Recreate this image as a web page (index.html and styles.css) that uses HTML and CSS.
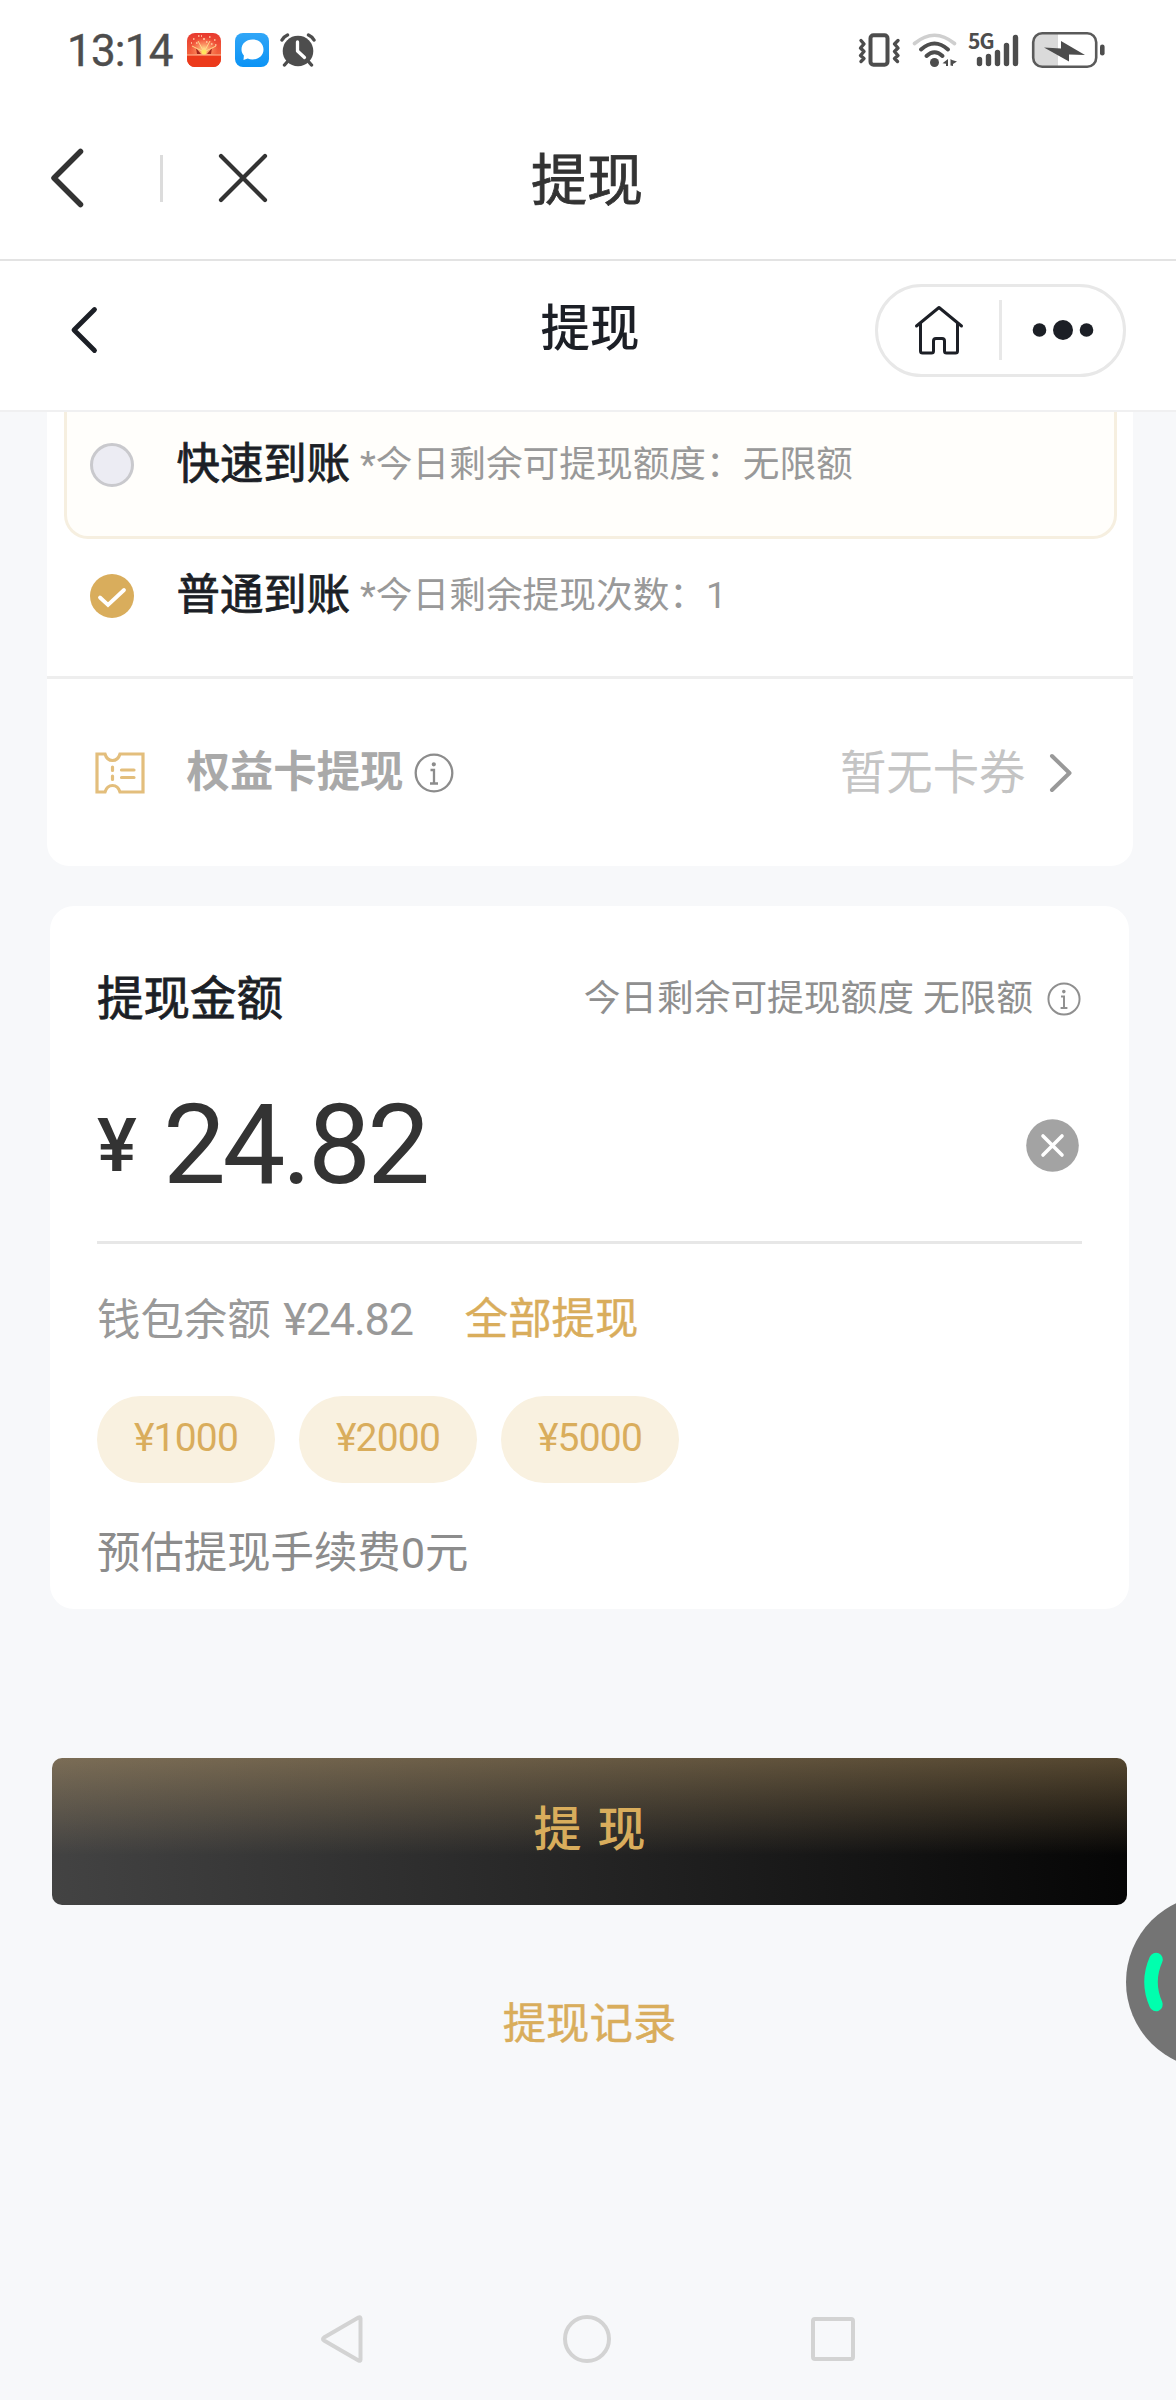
FILE: index.html
```html
<!DOCTYPE html>
<html lang="zh-CN">
<head>
<meta charset="utf-8">
<title>提现</title>
<link rel="stylesheet" href="styles.css">
</head>
<body>
<div class="statusbar">
  <div class="status-left">
    <span class="time">13:14</span>
    <svg class="app-icon" width="34" height="34" viewBox="0 0 34 34">
      <defs>
        <linearGradient id="red" x1="0" y1="0" x2="0" y2="1"><stop offset="0" stop-color="#e8392f"/><stop offset=".6" stop-color="#f2603c"/><stop offset="1" stop-color="#e02a14"/></linearGradient>
        <radialGradient id="glow"><stop offset="0" stop-color="#ffe08a"/><stop offset=".45" stop-color="#ff9d6b" stop-opacity=".75"/><stop offset="1" stop-color="#ff8a5a" stop-opacity="0"/></radialGradient>
      </defs>
      <rect width="34" height="34" rx="8" fill="url(#red)"/>
      <ellipse cx="17" cy="16" rx="14" ry="12" fill="url(#glow)"/>
      <path d="M9 15l5 6h-4zM25 15l-5 6h4z" fill="#a3261b"/>
      <path d="M17 19L5 13M17 19L29 13M17 19L11 8M17 19L23 8" stroke="#ffd98a" stroke-width="1"/>
      <path d="M6 6h1.500M11 3h1.500M22 4h1.500M27 7h1.500M16 6h2M9 10h1.500M24 11h1.500M14 3h1M19 9h1.500M28 12h1.500M4 10h1" stroke="#ffd0a8" stroke-width="1.500"/>
      <path d="M0 22h34v4a8 8 0 0 1-8 8H8a8 8 0 0 1-8-8z" fill="#ec3a1b"/>
      <path d="M0 22h34" stroke="#ffc09a" stroke-width="1.200"/>
      <circle cx="17" cy="19" r="2.600" fill="#ffe45e"/>
    </svg>
    <svg class="app-icon" width="34" height="34" viewBox="0 0 34 34">
      <defs><linearGradient id="blue" x1="0" y1="0" x2="0" y2="1"><stop offset="0" stop-color="#31a6f7"/><stop offset="1" stop-color="#0b93f5"/></linearGradient></defs>
      <rect width="34" height="34" rx="8" fill="url(#blue)"/>
      <path d="M17.500 6.500c6.600 0 11 4.400 11 10s-4.400 10-11 10c-1.800 0-3.400-.3-4.800-1l-4.200 1.500.4-4.500c-1.500-1.700-2.400-3.700-2.400-6 0-5.600 4.400-10 11-10z" fill="#fff"/>
    </svg>
    <svg class="alarm" width="36" height="34" viewBox="0 0 36 34">
      <g fill="none" stroke="#4d4d4d" stroke-width="3.400" stroke-linecap="round"><path d="M2 7Q4 3.500 7.500 2M34 7Q32 3.500 28.500 2M8 28l-3.500 4M28 28l3.500 4"/></g>
      <circle cx="18" cy="18" r="15.300" fill="#4d4d4d"/>
      <path d="M17.500 9v9l7 6.500" fill="none" stroke="#fff" stroke-width="3.300" stroke-linecap="round" stroke-linejoin="round"/>
    </svg>
  </div>
  <div class="status-right">
    <svg class="vibrate" width="44" height="36" viewBox="0 0 44 36" fill="none" stroke="#4d4d4d" stroke-linecap="round" stroke-linejoin="round">
      <rect x="12.500" y="3.200" width="17" height="29.600" rx="3" stroke-width="4"/>
      <path d="M3 8.500l3 3.500-3.500 4L6 19.500 2.500 23.500 6 26.500l-3 3M40 8.500l-3.500 3.500 3.500 4-3.500 3.500 3.500 4-3.500 3 3 3" stroke-width="3.400"/>
    </svg>
    <svg class="wifi" width="46" height="36" viewBox="0 0 46 36" fill="none" stroke-linecap="round">
      <path d="M2.500 11.500Q22.500-5 42.500 11.500" stroke="#cfcfcf" stroke-width="3.600"/>
      <path d="M9 17.500Q22.500 5.500 36 17.500" stroke="#4d4d4d" stroke-width="4"/>
      <path d="M14.500 24Q22.500 16.500 30.500 24" stroke="#4d4d4d" stroke-width="4"/>
      <circle cx="22.500" cy="30.500" r="4.500" fill="#4d4d4d"/>
      <path d="M36 27v7h-2v-2.200l-3.500-.5zM38.500 27l1.500 1 5 1.500-4 2.500v2l-2.500-.5z" fill="#4d4d4d"/>
    </svg>
    <div class="signal">
      <span class="net">5G</span>
      <svg width="54" height="36" viewBox="0 0 54 36" stroke="#4d4d4d" stroke-width="5.400" stroke-linecap="round">
        <path d="M12.500 27.500v4M21.500 24.500v7M30.500 20.500v11M39.500 13.500v18M48.500 5.500v26"/>
      </svg>
    </div>
    <svg class="battery" width="76" height="38" viewBox="0 0 76 38">
      <path d="M11 3h16v32H11a8 8 0 0 1-8-8V11a8 8 0 0 1 8-8z" fill="#dadada"/>
      <rect x="2.200" y="2.200" width="63" height="33.600" rx="9" fill="none" stroke="#5a5a5a" stroke-width="2.600"/>
      <path d="M13 16.500l17 1v-7.500L54 24l-16-.5v7z" fill="#4d4d4d"/>
      <rect x="69" y="13.500" width="4.600" height="11" rx="2.300" fill="#4d4d4d"/>
    </svg>
  </div>
</div>

<div class="navbar">
  <svg class="nav-back" width="36" height="62" viewBox="0 0 36 62"><path d="M31.500 4.500L5 31l26.500 26.500" /></svg>
  <span class="nav-sep"></span>
  <svg class="nav-close" width="52" height="52" viewBox="0 0 52 52"><path d="M4 4l44 44M48 4L4 48"/></svg>
  <h1 class="nav-title">提现</h1>
</div>

<div class="subnav">
  <svg class="sub-back" width="30" height="50" viewBox="0 0 30 50"><path d="M25.500 4.500L5 25l20.500 20.500"/></svg>
  <h2 class="sub-title">提现</h2>
  <div class="capsule">
    <svg width="52" height="54" viewBox="0 0 52 54" fill="none" stroke="#1c1f26" stroke-width="3" stroke-linecap="round" stroke-linejoin="round">
      <path d="M3.500 23L26 4.500 48.500 23M7.500 20v28q0 2 2 2h9q2 0 2-2V38q0-2.500 2.500-2.500h6q2.500 0 2.500 2.500v10q0 2 2 2h9q2 0 2-2V20"/>
    </svg>
    <span class="capsule-sep"></span>
    <svg width="62" height="22" viewBox="0 0 62 22" fill="#1c1f26"><circle cx="7.500" cy="11" r="6.800"/><circle cx="31" cy="11" r="10"/><circle cx="54.500" cy="11" r="6.800"/></svg>
  </div>
</div>

<main class="content">
  <section class="card methods">
    <div class="method fast">
      <span class="radio"></span>
      <span class="method-name">快速到账</span>
      <span class="method-note">*今日剩余可提现额度：无限额</span>
    </div>
    <div class="method normal">
      <svg class="radio-on" width="44" height="44" viewBox="0 0 44 44"><circle cx="22" cy="22" r="22" fill="#d9ad5c"/><path d="M10 23.500l8 7.500L34 16" fill="none" stroke="#fff" stroke-width="3.800" stroke-linecap="round"/></svg>
      <span class="method-name">普通到账</span>
      <span class="method-note">*今日剩余提现次数：1</span>
    </div>
    <div class="coupon">
      <svg width="50" height="42" viewBox="0 0 50 42" fill="none" stroke="#e3be7c" stroke-width="3.200">
        <path d="M2 2h8q2 6.500 7.500 6.500T25 2h23v38H25q-2-6.500-7.500-6.500T10 40H2z"/>
        <path d="M17.500 15v3.500M17.500 24v3.500M26.500 18H39M26.500 25.500H39" stroke-linecap="round"/>
      </svg>
      <span class="coupon-name">权益卡提现</span>
      <svg class="info" width="40" height="40" viewBox="0 0 40 40" fill="none" stroke="#8c8c8c" stroke-width="2.300"><circle cx="20" cy="20" r="18.300"/><path d="M16.500 17H20v13.500M16 30.500h8"/><circle cx="19.800" cy="11.300" r="1" fill="#8c8c8c"/></svg>
      <span class="coupon-value">暂无卡券</span>
      <svg class="chevron" width="24" height="40" viewBox="0 0 24 40"><path d="M3 3l17.500 17L3 37"/></svg>
    </div>
  </section>

  <section class="card amount">
    <div class="amount-head">
      <span class="amount-title">提现金额</span>
      <span class="amount-limit">今日剩余可提现额度 无限额</span>
      <svg class="info" width="34" height="34" viewBox="0 0 40 40" fill="none" stroke="#8f8f8f" stroke-width="2.300"><circle cx="20" cy="20" r="18.300"/><path d="M16.500 17H20v13.500M16 30.500h8"/><circle cx="19.800" cy="11.300" r="1" fill="#8f8f8f"/></svg>
    </div>
    <div class="amount-input">
      <span class="currency">¥</span>
      <span class="value">24.82</span>
      <svg class="clear" width="53" height="53" viewBox="0 0 53 53"><circle cx="26.500" cy="26.500" r="26.300" fill="#a3a3a3"/><path d="M17 17l19 19M36 17L17 36" stroke="#fff" stroke-width="3.600" stroke-linecap="round"/></svg>
    </div>
    <div class="balance">
      <span class="balance-text">钱包余额 <span class="balance-num">¥24.82</span></span>
      <span class="withdraw-all">全部提现</span>
    </div>
    <div class="chips">
      <span class="chip">¥1000</span>
      <span class="chip">¥2000</span>
      <span class="chip">¥5000</span>
    </div>
    <div class="fee">预估提现手续费0元</div>
  </section>

  <button class="submit">提 现</button>
  <a class="records">提现记录</a>
</main>

<footer class="sysnav">
  <svg width="44" height="50" viewBox="0 0 44 50"><path d="M38.500 3.500q2-1 2 1v41q0 2-2 1L4 26.500q-2-1.500 0-3z"/></svg>
  <svg width="50" height="50" viewBox="0 0 50 50"><circle cx="25" cy="25" r="22"/></svg>
  <svg width="46" height="46" viewBox="0 0 46 46"><rect x="3" y="3" width="40" height="40" rx="2"/></svg>
</footer>

<svg class="floating" width="52" height="180" viewBox="0 0 52 180">
  <circle cx="88" cy="90" r="87" fill="#747474"/>
  <path d="M31 67.500Q21 90 31 112.500" fill="none" stroke="#00ffae" stroke-width="13.500" stroke-linecap="round"/>
</svg>
</body>
</html>
```
FILE: styles.css
```css
* { box-sizing: border-box; }
body {
  margin: 0;
  width: 1176px;
  height: 2400px;
  position: relative;
  overflow: hidden;
  display: flex;
  flex-direction: column;
  background: #f7f8fa;
  font-family: Roboto, "Noto Sans CJK SC", sans-serif;
  color: #1c1f26;
}
svg { display: block; flex: none; }
span, a { white-space: nowrap; }

.statusbar {
  height: 100px;
  flex: none;
  background: #fff;
  display: flex;
  justify-content: space-between;
  padding: 0 69px 0 67px;
}
.status-left, .status-right { display: flex; align-items: center; height: 100px; }
.time { width: 120px; font-size: 44px; line-height: 50px; color: #4d4d4d; letter-spacing: -0.8px; margin-top: 2px; -webkit-text-stroke: 0.4px; }
.app-icon { margin-right: 13.500px; }
.alarm { margin-left: -2.500px; }
.vibrate { margin-right: 10px; }
.wifi { margin-right: 9px; }
.signal { position: relative; margin-right: 10px; }
.net {
  position: absolute;
  left: 1px;
  top: 0;
  font-family: "Noto Sans CJK SC", sans-serif;
  font-size: 21px;
  line-height: 17px;
  font-weight: 700;
  letter-spacing: -1px;
  color: #4d4d4d;
}

.navbar {
  position: relative;
  height: 161px;
  flex: none;
  background: #fff;
  border-bottom: 2px solid #e3e3e3;
  display: flex;
  align-items: center;
  padding: 0 0 3px 49px;
}
.nav-back path, .nav-close path, .sub-back path { fill: none; stroke: #333; stroke-width: 5.500; stroke-linecap: round; stroke-linejoin: round; }
.nav-close path { stroke-width: 4.200; }
.nav-sep { width: 3px; height: 47px; background: #dcdcdc; margin: 0 54px 0 75px; }
.nav-title, .sub-title { margin: 0; font-weight: 400; text-align: center; }
.nav-title { position: absolute; left: 0; right: 2px; top: 43px; font-size: 56px; line-height: 76px; color: #333; -webkit-text-stroke: 0.8px; }

.subnav {
  position: relative;
  height: 151px;
  flex: none;
  background: #fff;
  border-bottom: 2px solid #f0f0f1;
  display: flex;
  align-items: center;
  justify-content: space-between;
  padding: 0 50px 11px 69px;
}
.sub-back path { stroke: #1c1f26; stroke-width: 4.800; }
.sub-title { position: absolute; left: 4px; right: 0; top: 36px; font-size: 49.500px; line-height: 64px; font-weight: 500; }
.capsule {
  width: 251px;
  height: 93px;
  border: 3px solid #e8e8e8;
  border-radius: 47px;
  display: flex;
  align-items: center;
  padding-left: 35px;
}
.capsule-sep { width: 3px; height: 60px; background: #e8e8e8; margin: 0 30px 0 34px; }

.content { display: flex; flex-direction: column; align-items: center; padding-left: 3px; }
.card { background: #fff; }
.methods { width: 1086px; height: 454px; border-radius: 0 0 22px 22px; }
.method { display: flex; align-items: center; }
.fast {
  width: 1053px;
  height: 127px;
  margin-left: 17px;
  padding: 0 0 18px 23px;
  border: 3px solid #f6efe0;
  border-top: 0;
  border-radius: 0 0 24px 24px;
  background: #fffefb;
}
.normal { height: 140px; padding: 0 0 24px 43px; border-bottom: 3px solid #eee; }
.radio { width: 44px; height: 44px; border: 3px solid #c9c9cd; border-radius: 50%; background: #ececf3; flex: none; }
.method-name { margin-left: 43px; font-size: 43.400px; line-height: 60px; -webkit-text-stroke: 0.8px; }
.method-note { margin-left: 10px; font-size: 36.700px; line-height: 50px; color: #999; }
.coupon { height: 187px; display: flex; align-items: center; padding: 0 60px 0 48px; }
.coupon-name { margin-left: 42px; font-size: 43.400px; line-height: 60px; font-weight: 700; color: #a9a9a9; }
.coupon .info { margin-left: 11px; }
.coupon-value { margin-left: auto; font-size: 46.400px; line-height: 60px; color: #c4c4c4; }
.chevron { margin-left: 23px; }
.chevron path { fill: none; stroke: #999; stroke-width: 4; stroke-linecap: round; stroke-linejoin: round; }

.amount { width: 1079px; height: 703px; margin-top: 40px; padding: 0 47px; border-radius: 24px; }
.amount-head { display: flex; align-items: center; height: 186px; padding-right: 1px; }
.amount-title { font-size: 46.500px; line-height: 60px; -webkit-text-stroke: 0.8px; }
.amount-limit { margin-left: auto; font-size: 36.700px; line-height: 50px; color: #8f8f8f; }
.amount-head .info { margin-left: 14px; }
.amount-input { display: flex; align-items: center; height: 152px; padding: 0 3px 43px 0; border-bottom: 3px solid #e7e7e7; color: #333; }
.currency { font-size: 75px; line-height: 100px; font-weight: 500; width: 66px; }
.value { font-size: 112px; line-height: 110px; letter-spacing: -3.500px; }
.clear { margin-left: auto; }
.balance { display: flex; align-items: center; height: 152px; font-size: 43.400px; line-height: 60px; color: #999; }
.balance-num { font-size: 45px; letter-spacing: -1.200px; margin-left: 2px; }
.withdraw-all { margin-left: 52px; color: #d9ad5c; -webkit-text-stroke: 0.4px; }
.chips { display: flex; gap: 24px; }
.chip {
  width: 178px;
  height: 87px;
  border-radius: 44px;
  background: #f9f1e0;
  color: #d9ad5c;
  font-size: 39px;
  letter-spacing: -0.800px;
  line-height: 84px;
  text-align: center;
}
.fee { margin-top: 41px; font-size: 43.400px; line-height: 60px; color: #8c8c8c; }

.submit {
  width: 1075px;
  height: 147px;
  margin: 149px 0 0 0;
  padding: 0 0 4px;
  border: 0;
  border-radius: 10px;
  background:
    linear-gradient(180deg, rgba(215, 178, 118, .38), rgba(215, 178, 118, 0) 66%),
    linear-gradient(85deg, #434343, #050505);
  color: #d9ad5c;
  font: 500 48px/60px Roboto, "Noto Sans CJK SC", sans-serif;
  word-spacing: 4px;
}
.records { margin: 90px 0 0 0; font-size: 43.400px; line-height: 60px; color: #d9ad5c; -webkit-text-stroke: 0.4px; }

.sysnav {
  margin-top: auto;
  height: 122px;
  display: flex;
  align-items: center;
  justify-content: center;
  gap: 198px;
}
.sysnav svg { fill: none; stroke: #d3d3d3; stroke-width: 4; stroke-linejoin: round; }
.floating { position: absolute; right: -1px; top: 1892px; }
```
